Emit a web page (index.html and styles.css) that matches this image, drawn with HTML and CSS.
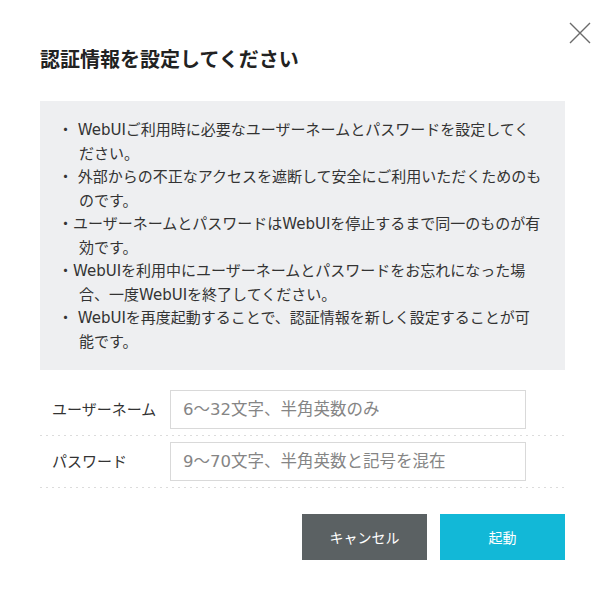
FILE: index.html
```html
<!DOCTYPE html>
<html>
<head>
    <title>認証情報の設定</title>
    <link rel="stylesheet" href="styles.css">
</head>
<body>
    <div class="dialog">
        <button class="close" aria-label="閉じる">
            <svg width="22" height="22" viewBox="0 0 22 22">
                <path d="M1 1 L21 21 M21 1 L1 21" stroke="#6b6b6b" stroke-width="1.4" fill="none"/>
            </svg>
        </button>
        <h2 class="title">認証情報を設定してください</h2>

        <ul class="notes">
            <li>・ WebUIご利用時に必要なユーザーネームとパスワードを設定してください。</li>
            <li>・ 外部からの不正なアクセスを遮断して安全にご利用いただくためのものです。</li>
            <li>・ユーザーネームとパスワードはWebUIを停止するまで同一のものが有効です。</li>
            <li>・WebUIを利用中にユーザーネームとパスワードをお忘れになった場合、一度WebUIを終了してください。</li>
            <li>・ WebUIを再度起動することで、認証情報を新しく設定することが可能です。</li>
        </ul>

        <div class="form-row">
            <label for="user">ユーザーネーム</label>
            <input type="text" id="user" placeholder="6～32文字、半角英数のみ">
        </div>
        <div class="form-row">
            <label for="pass">パスワード</label>
            <input type="password" id="pass" placeholder="9～70文字、半角英数と記号を混在">
        </div>

        <div class="actions">
            <button class="btn btn-cancel">キャンセル</button>
            <button class="btn btn-start">起動</button>
        </div>
    </div>
</body>
</html>
```

FILE: styles.css
```css
body {
    margin: 0;
    background: #fff;
    font-family: "DejaVu Sans", "Noto Sans CJK JP", sans-serif;
    color: #333;
}
.dialog {
    position: relative;
    width: 525px;
    padding: 46px 40px 40px;
}
.close {
    position: absolute;
    top: 22px;
    left: 569px;
    padding: 0;
    border: none;
    background: none;
    cursor: pointer;
}
.close svg {
    display: block;
}
.title {
    margin: 0 0 27px;
    font-size: 20px;
    line-height: 28px;
    font-weight: bold;
    color: #222;
}
.notes {
    list-style: none;
    margin: 0;
    padding: 18px 21.5px 16px 18px;
    background-color: #eeeff1;
    font-size: 15px;
    line-height: 23.5px;
}
.notes li {
    padding-left: 21px;
    text-indent: -21px;
}
.form-row {
    display: flex;
    align-items: center;
    padding: 6px 0 7px;
    background-image: linear-gradient(to right, #dcdcdc 2px, transparent 2px);
    background-size: 6px 1px;
    background-repeat: repeat-x;
    background-position: left bottom;
}
.notes + .form-row {
    margin-top: 14px;
}
.form-row label {
    width: 118px;
    padding-left: 12px;
    font-size: 15px;
    margin-top: -2px;
}
.form-row input {
    width: 356px;
    height: 39px;
    box-sizing: border-box;
    border: 1px solid #d9d9d9;
    padding: 0 12px;
    font-family: inherit;
    font-size: 16.5px;
    color: #333;
    outline: none;
}
.form-row input::placeholder {
    color: #858585;
}
.actions {
    display: flex;
    justify-content: flex-end;
    gap: 13px;
    margin-top: 26px;
}
.btn {
    width: 125px;
    height: 46px;
    border: none;
    color: #fff;
    font-family: inherit;
    font-size: 14px;
    cursor: pointer;
}
.btn-cancel {
    background-color: #5b6163;
}
.btn-start {
    background-color: #12b8d7;
}
```
